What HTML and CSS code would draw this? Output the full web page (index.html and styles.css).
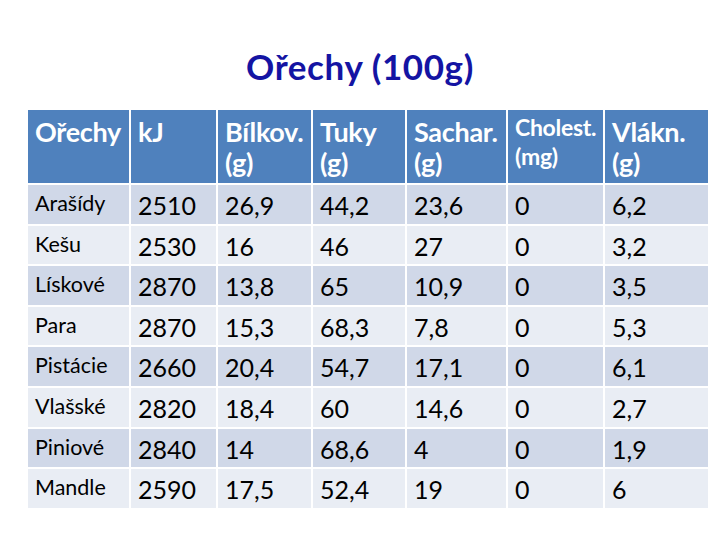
FILE: index.html
```html
<!DOCTYPE html>
<html lang="cs">
<head>
<meta charset="utf-8">
<title>Ořechy (100g)</title>
<link rel="stylesheet" href="styles.css">
</head>
<body>
<h1 class="title">Ořechy (100g)</h1>
<div class="table">
  <div class="cell head">Ořechy</div>
  <div class="cell head">kJ</div>
  <div class="cell head">Bílkov.<br>(g)</div>
  <div class="cell head">Tuky<br>(g)</div>
  <div class="cell head">Sachar.<br>(g)</div>
  <div class="cell head small">Cholest.<br>(mg)</div>
  <div class="cell head">Vlákn.<br>(g)</div>

  <div class="cell name dark">Arašídy</div><div class="cell num dark">2510</div><div class="cell num dark">26,9</div><div class="cell num dark">44,2</div><div class="cell num dark">23,6</div><div class="cell num dark">0</div><div class="cell num dark">6,2</div>
  <div class="cell name light">Kešu</div><div class="cell num light">2530</div><div class="cell num light">16</div><div class="cell num light">46</div><div class="cell num light">27</div><div class="cell num light">0</div><div class="cell num light">3,2</div>
  <div class="cell name dark">Lískové</div><div class="cell num dark">2870</div><div class="cell num dark">13,8</div><div class="cell num dark">65</div><div class="cell num dark">10,9</div><div class="cell num dark">0</div><div class="cell num dark">3,5</div>
  <div class="cell name light">Para</div><div class="cell num light">2870</div><div class="cell num light">15,3</div><div class="cell num light">68,3</div><div class="cell num light">7,8</div><div class="cell num light">0</div><div class="cell num light">5,3</div>
  <div class="cell name dark">Pistácie</div><div class="cell num dark">2660</div><div class="cell num dark">20,4</div><div class="cell num dark">54,7</div><div class="cell num dark">17,1</div><div class="cell num dark">0</div><div class="cell num dark">6,1</div>
  <div class="cell name light">Vlašské</div><div class="cell num light">2820</div><div class="cell num light">18,4</div><div class="cell num light">60</div><div class="cell num light">14,6</div><div class="cell num light">0</div><div class="cell num light">2,7</div>
  <div class="cell name dark">Piniové</div><div class="cell num dark">2840</div><div class="cell num dark">14</div><div class="cell num dark">68,6</div><div class="cell num dark">4</div><div class="cell num dark">0</div><div class="cell num dark">1,9</div>
  <div class="cell name light">Mandle</div><div class="cell num light">2590</div><div class="cell num light">17,5</div><div class="cell num light">52,4</div><div class="cell num light">19</div><div class="cell num light">0</div><div class="cell num light">6</div>
</div>
</body>
</html>
```
FILE: styles.css
```css
html, body {
  margin: 0;
  padding: 0;
  background: #ffffff;
}
body {
  width: 720px;
  height: 540px;
  font-family: Lato, "Open Sans", sans-serif;
  color: #000000;
}
.title {
  margin: 0;
  padding-top: 46px;
  height: 62px;
  box-sizing: border-box;
  text-align: center;
  font-size: 35px;
  line-height: 40px;
  font-weight: 700;
  color: #1414a3;
  letter-spacing: 0.6px;
}
.table {
  margin-left: 28px;
  margin-top: 48px;
  width: 680px;
  display: grid;
  grid-template-columns: 101px 85px 93px 92px 99px 95px 103px;
  grid-template-rows: 73px repeat(8, 38.6px);
  gap: 2px;
}
.cell {
  box-sizing: border-box;
  padding-left: 7px;
  white-space: nowrap;
}
.head {
  background: #4f81bd;
  color: #ffffff;
  font-weight: 700;
  font-size: 27px;
  line-height: 31px;
  padding-top: 6px;
  letter-spacing: -0.3px;
}
.head.small {
  font-size: 23px;
  line-height: 29px;
  padding-top: 3px;
  letter-spacing: -0.3px;
}
.dark { background: #d0d8e8; }
.light { background: #e9edf4; }
.name {
  font-size: 21.5px;
  line-height: 26px;
  padding-top: 5px;
}
.num {
  font-size: 25px;
  line-height: 30px;
  padding-top: 5px;
}
```
